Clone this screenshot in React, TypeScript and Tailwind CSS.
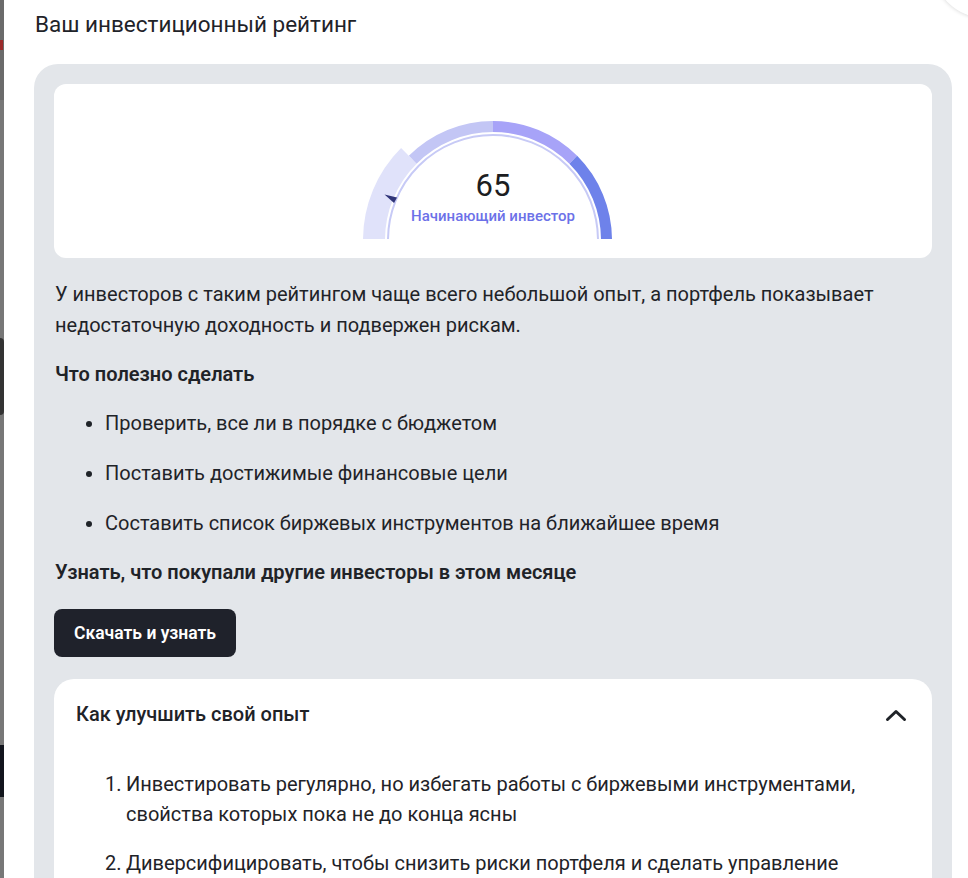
import React from "react";

const CX = 130;
const CY = 124;

function seg(ri: number, ro: number, a0: number, a1: number): string {
  const p = (r: number, a: number) => {
    const t = (a * Math.PI) / 180;
    return `${(CX + r * Math.cos(t)).toFixed(2)} ${(CY - r * Math.sin(t)).toFixed(2)}`;
  };
  return `M ${p(ro, a0)} A ${ro} ${ro} 0 0 1 ${p(ro, a1)} L ${p(ri, a1)} A ${ri} ${ri} 0 0 0 ${p(ri, a0)} Z`;
}

function Gauge() {
  return (
    <div className="relative w-[260px] h-[123px]">
      <svg width="260" height="123" viewBox="0 0 260 123" className="block">
        <path d={seg(108, 130, 180, 135)} fill="#e0e2fa" />
        <path d={seg(108, 119, 135, 90)} fill="#c3c6f5" />
        <path d={seg(108, 119, 90, 45)} fill="#a7a3f8" />
        <path d={seg(108, 119, 45, 0)} fill="#6e82ea" />
        <circle cx={CX} cy={CY} r="105" fill="none" stroke="#c7caf6" strokeWidth="2" />
        <polygon points="21.5,78.5 34,81.5 31,87" fill="#2f3478" />
      </svg>
      <div className="absolute left-0 right-0 top-[51px] flex flex-col items-center">
        <div className="text-[31px] leading-[38px] text-[#1c1d21]">65</div>
        <div className="mt-[1px] text-[15px] leading-[20px] font-medium text-[#6c71e8]">
          Начинающий инвестор
        </div>
      </div>
    </div>
  );
}

function Chevron() {
  return (
    <svg width="22" height="14" viewBox="0 0 22 14" fill="none">
      <polyline
        points="2.5,11.5 11,3.5 19.5,11.5"
        stroke="#1f2328"
        strokeWidth="3"
        strokeLinecap="round"
        strokeLinejoin="round"
      />
    </svg>
  );
}

export default function App() {
  const bullets = [
    "Проверить, все ли в порядке с бюджетом",
    "Поставить достижимые финансовые цели",
    "Составить список биржевых инструментов на ближайшее время",
  ];
  return (
    <div className="relative w-[968px] h-[878px] overflow-hidden bg-white flex font-['Roboto','Noto_Sans',sans-serif] text-[#1f2328]">
      {/* background strip behind the dialog */}
      <div className="w-[4px] h-full shrink-0 bg-[#777777] flex flex-col">
        <div className="h-[100px] bg-[#6b6b6b] flex flex-col">
          <div className="mt-[40px] h-[10px] w-[3px] bg-[#9b2b2b]" />
        </div>
        <div className="mt-[238px] h-[77px] w-[4px] rounded-r-full bg-[#333333]" />
        <div className="mt-[330px] h-[52px] w-[4px] bg-[#12151d]" />
      </div>

      <div className="flex-1 flex flex-col">
        <div className="pt-[9px] pl-[31px] text-[22.5px] leading-[30px] text-[#1f2329]">
          Ваш инвестиционный рейтинг
        </div>

        <div className="mt-[25px] ml-[30px] mr-[16px] flex-1 rounded-t-[24px] bg-[#e3e6ea] px-[20px] pt-[20px]">
          <div className="rounded-[12px] bg-white pt-[32px] pb-[19px] flex justify-center">
            <Gauge />
          </div>

          <div className="mt-[21px] flex flex-col gap-[18px] text-[20px] leading-[31px]">
            <p className="pl-[1px]">
              У инвесторов с таким рейтингом чаще всего небольшой опыт, а портфель показывает
              <br />
              недостаточную доходность и подвержен рискам.
            </p>
            <p className="pl-[1px] font-semibold">Что полезно сделать</p>
            <ul className="flex flex-col gap-[19px] pl-[32px]">
              {bullets.map((b) => (
                <li key={b} className="flex items-center">
                  <span className="w-[6px] h-[6px] rounded-full bg-[#1f2328] mr-[13px] shrink-0" />
                  <span>{b}</span>
                </li>
              ))}
            </ul>
            <p className="pl-[1px] font-semibold">Узнать, что покупали другие инвесторы в этом месяце</p>
          </div>

          <button className="mt-[21px] h-[48px] px-[20px] rounded-[8px] bg-[#1f222b] text-white text-[17.5px] font-semibold">
            Скачать и узнать
          </button>

          <div className="mt-[22px] rounded-t-[20px] bg-white px-[22px] pt-[20px] pb-[30px]">
            <div className="flex items-center justify-between">
              <div className="text-[20px] leading-[31px] font-medium">Как улучшить свой опыт</div>
              <div className="mr-[3px]">
                <Chevron />
              </div>
            </div>
            <ol className="mt-[39px] flex flex-col gap-[19px] pl-[29px] text-[20px] leading-[30px]">
              <li className="flex">
                <span className="w-[21px] shrink-0">1.</span>
                <span>
                  Инвестировать регулярно, но избегать работы с биржевыми инструментами,
                  <br />
                  свойства которых пока не до конца ясны
                </span>
              </li>
              <li className="flex">
                <span className="w-[21px] shrink-0">2.</span>
                <span>
                  Диверсифицировать, чтобы снизить риски портфеля и сделать управление
                  <br />
                  более простым
                </span>
              </li>
            </ol>
          </div>
        </div>
      </div>

      <div className="absolute left-[933px] top-[-86px] w-[104px] h-[104px] rounded-full bg-white shadow-[0_0_4px_rgba(0,0,0,0.18)]" />
    </div>
  );
}
